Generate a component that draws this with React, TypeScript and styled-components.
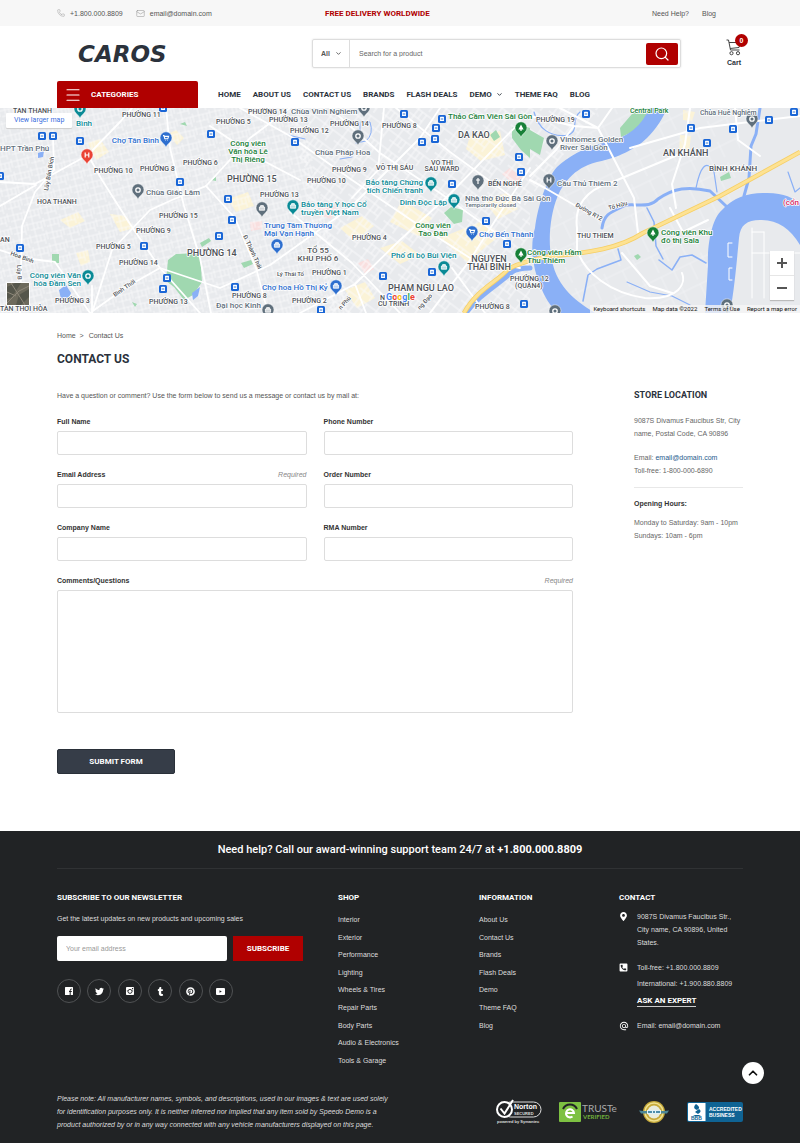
import React from "react";
import styled, { createGlobalStyle } from "styled-components";
import { ChevronDown, ChevronUp, Mail, Menu, Phone, Search } from "lucide-react";
import {
  FaMapMarkerAlt,
  FaPhoneSquareAlt,
  FaPinterest,
  FaTumblr,
  FaTwitter,
} from "react-icons/fa";
import { MdAlternateEmail } from "react-icons/md";

const sans = `"Liberation Sans", Arial, sans-serif`;
const display = `Roboto, "Liberation Sans", sans-serif`;
const red = "#b00000";
const ink = "#2b323c";

const GlobalStyle = createGlobalStyle`
  *, *::before, *::after { box-sizing: border-box; }
  body { margin: 0; background: #fff; color: #555; font: 7px/13px ${sans}; }
  a { color: inherit; text-decoration: none; }
  button, input, textarea, select { font: inherit; color: inherit; margin: 0; border: 0; padding: 0; background: none; }
  h1, h2, h3, p, ul { margin: 0; padding: 0; }
  ul { list-style: none; }
  svg { display: block; flex: none; }
`;

const Container = styled.div`
  padding: 0 57px;
`;

/* ---------- header ---------- */

const TopBar = styled(Container)`
  display: flex;
  align-items: center;
  height: 26px;
  background: #f7f7f7;
`;
const TopContacts = styled.div`
  display: flex;
  gap: 13px;
  flex: 0 0 268px;
`;
const TopLink = styled.a`
  display: flex;
  align-items: center;
  gap: 5px;
  svg { color: #999; }
`;
const Promo = styled.strong`
  font: 700 8px/13px ${display};
  color: ${red};
`;
const TopLinks = styled.nav`
  display: flex;
  gap: 13px;
  margin-left: auto;
  padding-right: 27px;
`;

const Brand = styled(Container)`
  display: flex;
  align-items: center;
  height: 55px;
`;
const Logo = styled.a`
  flex: 0 0 255px;
  padding-left: 21px;
  font: italic 700 23px/26px "DejaVu Sans", sans-serif;
  color: ${ink};
`;
const SearchForm = styled.form`
  display: flex;
  align-items: center;
  flex: 1;
  height: 29px;
  padding-right: 2px;
  border: 1px solid #ddd;
  border-radius: 2px;
  box-shadow: 0 0 2px #ddd;
`;
const ScopeBox = styled.div`
  position: relative;
  display: flex;
  align-items: center;
  height: 100%;
  border-right: 1px solid #ddd;
  svg { position: absolute; right: 7px; pointer-events: none; }
`;
const Scope = styled.select`
  appearance: none;
  width: 36px;
  height: 100%;
  padding-left: 8px;
  font-weight: 700;
`;
const SearchInput = styled.input`
  flex: 1;
  min-width: 0;
  height: 100%;
  padding: 0 9px;
  outline: 0;
  &::placeholder { color: #666; opacity: 1; }
`;
const SearchButton = styled.button`
  display: grid;
  place-items: center;
  width: 32px;
  height: 22px;
  border-radius: 2px;
  background: ${red};
  color: #fff;
`;
const Cart = styled.a`
  position: relative;
  display: flex;
  flex-direction: column;
  align-items: center;
  gap: 1px;
  width: 18px;
  margin-left: 44px;
  font-weight: 700;
  line-height: 11px;
  color: ${ink};
`;
const CartCount = styled.span`
  position: absolute;
  top: -5px;
  left: 10px;
  width: 13px;
  height: 13px;
  border-radius: 50%;
  background: ${red};
  color: #fff;
  line-height: 13px;
  text-align: center;
`;

const NavRow = styled(Container)`
  display: flex;
  align-items: center;
  height: 27px;
  font: 700 8px/13px ${display};
  color: ${ink};
`;
const Categories = styled.button`
  display: flex;
  align-items: center;
  gap: 9px;
  flex: 0 0 141px;
  height: 27px;
  padding-left: 7px;
  border-radius: 2px 2px 0 0;
  background: ${red};
  color: #fff;
`;
const MainNav = styled.nav`
  display: flex;
  gap: 12px;
  margin-left: 20px;
  white-space: nowrap;
  a { display: flex; align-items: center; gap: 4px; }
`;

/* ---------- map ---------- */

const MapFrame = styled.section`
  position: relative;
  height: 205px;
  overflow: hidden;
  background: #e8eaed;
  font-family: Roboto, sans-serif;
`;
const MapCanvas = styled.svg`
  width: 100%;
  height: 100%;
`;
const LargerMap = styled.a`
  position: absolute;
  top: 5px;
  left: 6px;
  padding: 1px 8px;
  border-radius: 1px;
  background: #fff;
  color: #3b6fe0;
  box-shadow: 0 1px 1px #ccc;
`;
const Satellite = styled.button`
  position: absolute;
  bottom: 7px;
  left: 6px;
  width: 24px;
  height: 24px;
  border: 1px solid #fff;
  border-radius: 1px;
  overflow: hidden;
`;
const ZoomControls = styled.div`
  position: absolute;
  right: 6px;
  bottom: 13px;
  display: grid;
  gap: 1px;
  width: 24px;
  background: #e6e6e6;
  box-shadow: 0 1px 1px #bbb;
`;
const ZoomButton = styled.button`
  display: grid;
  place-items: center;
  height: 24px;
  background: #fff;
`;
const Attribution = styled.div`
  position: absolute;
  right: 0;
  bottom: 0;
  display: flex;
  gap: 7px;
  padding: 0 3px;
  background: rgba(245, 245, 245, 0.8);
  font-size: 6px;
  line-height: 8px;
  color: #111;
`;

/* ---------- contact page ---------- */

const Breadcrumb = styled.nav`
  display: flex;
  gap: 5px;
  padding-top: 16px;
`;
const PageTitle = styled.h1`
  padding-top: 9px;
  font: 700 12px/16px ${display};
  color: ${ink};
`;
const Columns = styled.main`
  display: grid;
  grid-template-columns: 1fr 109px;
  gap: 61px;
  padding-top: 22px;
`;
const Form = styled.form`
  display: grid;
  grid-template-columns: 1fr 1fr;
  gap: 14px 17px;
  padding-bottom: 57px;
`;
const Wide = styled.div`
  grid-column: 1 / -1;
`;
const FieldHead = styled.div`
  display: flex;
  justify-content: space-between;
  height: 15px;
  line-height: 12px;
  label { font-weight: 700; color: #333; }
  em { color: #888; }
`;
const Input = styled.input`
  display: block;
  width: 100%;
  height: 24px;
  padding: 0 8px;
  border: 1px solid #ddd;
  border-radius: 2px;
`;
const TextArea = styled.textarea`
  display: block;
  width: 100%;
  height: 123px;
  padding: 8px;
  border: 1px solid #ddd;
  border-radius: 2px;
  resize: none;
`;
const Submit = styled.button`
  width: 118px;
  height: 25px;
  margin-top: 22px;
  border: 1px solid #2a3039;
  border-radius: 2px;
  background: #363d48;
  color: #fff;
  font: 700 8px/13px ${display};
`;
const Aside = styled.aside`
  color: #666;
  h2 { margin-bottom: 12px; font: 700 9px/13px ${display}; color: ${ink}; }
  h3 { margin-bottom: 6px; padding-top: 9px; border-top: 1px solid #e8e8e8; font: 700 7px/13px ${sans}; color: #333; }
  p { margin-bottom: 11px; white-space: nowrap; }
  p + h3 { margin-top: -1px; }
  a { color: #1e5a8c; }
`;

/* ---------- footer ---------- */

const Footer = styled.footer`
  position: relative;
  padding: 0 57px 12px;
  background: #212325;
  color: #ddd;
`;
const HelpLine = styled.p`
  padding: 10px 0 9px;
  border-bottom: 1px solid #303234;
  font: 500 11px/18px ${display};
  color: #fff;
  text-align: center;
`;
const FooterGrid = styled.div`
  display: grid;
  grid-template-columns: 281fr 141fr 140fr 124fr;
  padding-top: 22px;
`;
const FooterTitle = styled.h2`
  font: 700 8px/13px ${display};
  color: #fff;
`;
const Newsletter = styled.form`
  display: grid;
  grid-template-columns: 170px 70px;
  gap: 11px 6px;
  padding-top: 8px;
  label { grid-column: 1 / -1; }
`;
const EmailInput = styled.input`
  height: 25px;
  padding: 0 9px;
  border-radius: 2px;
  background: #fff;
  color: #333;
  &::placeholder { color: #999; opacity: 1; }
`;
const Subscribe = styled.button`
  height: 25px;
  background: ${red};
  color: #fff;
  font: 700 8px/13px ${display};
`;
const Social = styled.div`
  display: flex;
  justify-content: space-between;
  width: 176px;
  padding-top: 18px;
`;
const SocialLink = styled.a`
  display: grid;
  place-items: center;
  width: 24px;
  height: 24px;
  border: 1px solid #505254;
  border-radius: 50%;
  color: #fff;
`;
const LinkList = styled.ul`
  display: grid;
  grid-template-rows: repeat(9, 1fr);
  align-items: center;
  height: 158px;
  margin-top: 7px;
`;
const ContactItem = styled.div<{ $top: number }>`
  display: grid;
  grid-template-columns: 18px 1fr;
  padding-top: ${(p) => p.$top}px;
  white-space: nowrap;
  svg { margin-top: 2px; color: #fff; }
`;
const ContactLines = styled.div`
  display: grid;
  justify-items: start;
  gap: 3px;
`;
const Expert = styled.a`
  margin-top: 2px;
  border-bottom: 1px solid #ccc;
  font: 700 8px/11px ${display};
  color: #fff;
`;
const FooterBottom = styled.div`
  display: flex;
  justify-content: space-between;
  padding-top: 23px;
`;
const Disclaimer = styled.p`
  width: 345px;
  font-style: italic;
`;
const Badges = styled.div`
  display: flex;
  align-items: center;
  gap: 17px;
`;
const ToTop = styled.a`
  position: absolute;
  right: 36px;
  bottom: 59px;
  display: grid;
  place-items: center;
  width: 22px;
  height: 22px;
  border-radius: 50%;
  background: #fff;
  color: #111;
`;

/* ---------- map data ---------- */

const TONES = {
  area: "#4d5156",
  grey: "#5f6f7c",
  blue: "#2e6fcf",
  teal: "#0a8a96",
  green: "#188038",
  pink: "#d81b60",
  red: "#ea4335",
};
type Tone = keyof typeof TONES;
type Anchor = "start" | "middle" | "end";
type Label = [text: string, x: number, y: number, tone?: Tone, size?: number, anchor?: Anchor, turn?: number];

const LABELS: Label[] = [
  ["TAN THANH", 13, 5], ["Bình", 76, 18, "teal", 8], ["PHƯỜNG 11", 122, 9], ["PHƯỜNG 5", 216, 16],
  ["HPT Trần Phú", 0, 43, "grey", 8], ["Chợ Tân Bình", 159, 35, "blue", 8, "end"],
  ["Công viên", 248, 38, "green", 8, "middle"], ["Văn hóa Lê", 248, 46, "green", 8, "middle"], ["Thị Riêng", 248, 54, "green", 8, "middle"],
  ["PHƯỜNG 10", 94, 65], ["PHƯỜNG 8", 140, 63], ["PHƯỜNG 6", 183, 57], ["PHƯỜNG 15", 227, 74, "area", 9],
  ["Chùa Giác Lâm", 146, 87, "grey", 8], ["HOA THANH", 37, 96], ["PHƯỜNG 15", 159, 110], ["PHƯỜNG 9", 136, 125],
  ["PHƯỜNG 5", 96, 141], ["PHƯỜNG 14", 119, 157], ["PHƯỜNG 14", 187, 148, "area", 9],
  ["Công viên Văn", 81, 170, "teal", 8, "end"], ["hóa Đầm Sen", 81, 178, "teal", 8, "end"],
  ["PHƯỜNG 3", 55, 195], ["PHƯỜNG 13", 149, 196], ["PHƯỜNG 8", 232, 190], ["Đại học Kinh", 216, 200, "grey", 8],
  ["TÂN THỚI HÒA", 0, 203], ["AN", 0, 134], ["Hòa Bình", 10, 147, "area", 6, "start", 20], ["Lũy Bán Bích", 48, 83, "area", 6, "start", -80],
  ["Bình Thới", 115, 189, "area", 6, "start", -35], ["Đ. Thành Thái", 243, 128, "area", 6, "start", 65], ["Lũy B", 17, 157, "area", 6, "start", 88],
  ["PHƯỜNG 14", 248, 6], ["Chùa Vinh Nghiem", 291, 6, "grey", 8], ["PHƯỜNG 13", 269, 14], ["PHƯỜNG 12", 290, 25], ["PHƯỜNG 14", 330, 18],
  ["PHƯỜNG 8", 382, 20], ["Thảo Cầm Viên Sài Gòn", 448, 11, "green", 8], ["DA KAO", 458, 30, "area", 9], ["Chùa Pháp Hoa", 315, 47, "grey", 8],
  ["PHƯỜNG 9", 332, 64], ["VÕ THỊ SÁU", 376, 62], ["VO THI", 442, 57, "area", 7, "middle"], ["SAU WARD", 442, 63, "area", 7, "middle"], ["PHƯỜNG 10", 307, 75],
  ["PHƯỜNG 13", 260, 89], ["Bảo tàng Chứng", 423, 77, "teal", 8, "end"], ["tích Chiến tranh", 423, 85, "teal", 8, "end"], ["BẾN NGHÉ", 488, 78],
  ["Dinh Độc Lập", 447, 97, "teal", 8, "end"], ["Nhà thờ Đức Bà Sài Gòn", 465, 93, "grey", 8], ["Temporarily closed", 465, 99, "grey", 6],
  ["Bảo tàng Y học Cổ", 301, 99, "teal", 8], ["truyền Việt Nam", 301, 107, "teal", 8], ["Trung Tâm Thương", 264, 120, "blue", 8], ["Mại Vạn Hạnh", 264, 128, "blue", 8],
  ["PHƯỜNG 4", 352, 132], ["Công viên", 433, 120, "green", 8, "middle"], ["Tao Đàn", 433, 128, "green", 8, "middle"], ["Chợ Bến Thành", 479, 129, "blue", 8],
  ["TỔ 55", 318, 145, "area", 8, "middle"], ["KHU PHỐ 6", 318, 153, "area", 8, "middle"], ["Phố đi bộ Bùi Viện", 391, 150, "teal", 8],
  ["NGUYEN", 489, 154, "area", 9, "middle"], ["THAI BINH", 489, 162, "area", 9, "middle"], ["Lý Thái Tổ", 277, 168, "area", 6], ["PHƯỜNG 1", 312, 167],
  ["Chợ hoa Hồ Thị Kỷ", 262, 182, "blue", 8], ["PHAM NGU LAO", 388, 183, "area", 9], ["N", 380, 192], ["CU TRINH", 378, 198], ["PHƯỜNG 2", 292, 195],
  ["PHƯỜNG 8", 475, 201], ["PHƯỜNG 12", 510, 173], ["(QUẬN4)", 515, 180], ["n Phú", 341, 202, "area", 6, "start", -48], ["ng Đạo", 420, 202, "area", 6, "start", -48],
  ["PHƯỜNG 19", 536, 14], ["Central Park", 630, 5, "green", 7], ["Chùa Huê Nghiêm", 700, 7, "grey", 7],
  ["Vinhomes Golden", 560, 34, "grey", 8], ["River Sài Gòn", 560, 42, "grey", 8],
  ["AN KHÁNH", 663, 48, "area", 9], ["BÌNH KHÁNH", 709, 63, "area", 8], ["Cầu Thủ Thiêm 2", 557, 78, "grey", 8],
  ["Đường R12", 575, 98, "area", 6, "start", 30], ["Tố Hữu", 609, 102, "area", 6, "start", -15], ["THU THIEM", 577, 130],
  ["Công viên Hầm", 527, 147, "green", 8], ["Thu Thiêm", 527, 155, "green", 8], ["Công viên Khu", 661, 127, "green", 8], ["đô thị Sala", 661, 135, "green", 8],
  ["(cổn", 799, 97, "pink", 8, "end"],
];

const STOPS: [number, number][] = [
  [42, 28], [53, 28], [80, 33], [211, 26], [180, 74], [0, 68], [228, 91], [232, 112], [219, 128], [144, 138], [20, 140], [167, 170], [163, 181], [235, 179],
  [404, 6], [442, 11], [436, 20], [435, 31], [422, 34], [295, 34], [519, 49], [521, 64], [452, 76], [486, 113], [507, 136], [432, 164], [383, 168], [321, 202], [524, 196],
  [586, 6], [691, 20], [733, 21], [769, 12], [794, 4], [707, 35], [163, 0],
];

type Glyph = "dot" | "H" | "bag" | "tree" | "cross" | "cart";
const PINS: [number, number, Tone, Glyph][] = [
  [80, 1, "teal", "dot"], [87, 47, "red", "H"], [166, 30, "blue", "cart"], [138, 82, "grey", "dot"], [262, 100, "grey", "bag"], [88, 168, "teal", "dot"], [268, 202, "grey", "bag"],
  [364, 0, "grey", "dot"], [358, 28, "grey", "dot"], [521, 20, "green", "tree"], [431, 75, "teal", "bag"], [478, 73, "grey", "cross"], [454, 92, "teal", "bag"], [293, 98, "teal", "bag"],
  [472, 124, "blue", "cart"], [277, 137, "blue", "bag"], [521, 146, "green", "tree"], [444, 159, "teal", "bag"], [336, 178, "blue", "bag"],
  [552, 33, "grey", "dot"], [549, 72, "grey", "H"], [752, 11, "grey", "dot"], [653, 125, "green", "tree"], [555, 203, "grey", "dot"], [727, 197, "grey", "dot"],
];

const GLYPHS: Record<Glyph, React.ReactNode> = {
  dot: <circle r="2.2" fill="none" stroke="#fff" strokeWidth="1.3" />,
  H: <path d="M-1.8-2.5v5M1.8-2.5v5M-1.8 0h3.6" stroke="#fff" strokeWidth="1.2" fill="none" />,
  bag: <path d="M-2.6-1h5.2v3.2h-5.2zM-1.4-1v-1.4h2.8V-1" stroke="#fff" strokeWidth=".8" fill="#fff" fillOpacity=".7" />,
  tree: <path d="M0-3.4 2.6 1.4H.6v1.6H-.6V1.4h-2z" fill="#fff" />,
  cross: <path d="M0-3v6M-2-1h4" stroke="#fff" strokeWidth="1.2" />,
  cart: <path d="M-3-2.4h1l.8 3.2h3l.8-2.4h-4M-1 2.4h.4M1.6 2.4H2" stroke="#fff" strokeWidth="1.1" fill="none" />,
};

const Pin = ({ x, y, tone, glyph }: { x: number; y: number; tone: Tone; glyph: Glyph }) => (
  <g transform={`translate(${x} ${y})`}>
    <path d="M0 9.5C-.8 6-6 4.2-6-.2A6 6 0 0 1 6-.2C6 4.2.8 6 0 9.5Z" fill={TONES[tone]} stroke="#fff" strokeWidth=".5" />
    {GLYPHS[glyph]}
  </g>
);

const CityMap = () => (
  <MapCanvas viewBox="0 0 800 205" preserveAspectRatio="xMidYMid slice" role="img" aria-label="Map of Ho Chi Minh City">
    <defs>
      <pattern id="west" width="17" height="13" patternUnits="userSpaceOnUse" patternTransform="rotate(-14)">
        <path d="M0 3h17M0 9h12M4 0v13M12 3v10M8 3v6M15 0v9" stroke="#fafbfc" strokeWidth=".7" fill="none" />
      </pattern>
      <pattern id="mid" width="22" height="17" patternUnits="userSpaceOnUse" patternTransform="rotate(37)">
        <path d="M0 4h22M0 12h15M5 0v17M15 4v13M10 4v8" stroke="#fafbfc" strokeWidth=".9" fill="none" />
      </pattern>
      <pattern id="east" width="32" height="23" patternUnits="userSpaceOnUse" patternTransform="rotate(-26)">
        <path d="M0 5h32M8 5v18M22 0v17" stroke="#f2f4f6" strokeWidth=".7" fill="none" />
      </pattern>
    </defs>
    <rect width="800" height="205" fill="#e8eaed" />
    <g fill="#fbf3d7">
      <path d="M88 35l12-4 9 13-13 8zM60 112l18-8 7 9-15 7zM110 106l16 2 8 12-14 4zM168 26l8-4 8 8-7 7zM228 91l20-7 6 14-18 6zM18 10l20 3-6 8-14-2zM76 145l12-3 2 12-9 4z" />
      <path d="M470 28l30-5 5 24-24 6-15-12zM402 92l30 18-14 18-28-14zM440 130l40-16 22 12-35 28zM380 140l22-7 18 14-20 9zM340 120l22-12 12 10-20 15zM484 93l22-8 12 16-20 10zM345 182l20-8 10 16-18 10z" />
      <path d="M680 27l11 1-2 16-10 1zM683 2l12 2-3 9-9-1z" />
    </g>
    <g fill="#f9dfdf"><path d="M318 94l18 5-5 12-15-5zM502 66l8-6 13 10-6 9zM250 114l12-1v8l-11 2zM358 155l10-4 6 10-9 5z" /></g>
    <path d="M0 0H300L350 205H0Z" fill="url(#west)" />
    <path d="M290 0H600L530 90V205H330Z" fill="url(#mid)" />
    <path d="M600 0H740V90L705 205H540V90Z" fill="url(#east)" />
    <g fill="#a0d8b0">
      <path d="M168 152l8-6 24-1 2 29-9 13-9 5-10-13-8-6z" />
      <path d="M52 146h7v9h-7zM241 155l10-3 2 4-9 4zM211 72l5-3v4zM200 135l9-5 2 3-9 6zM180 16l5-2 2 4zM132 194l5 2-2 3z" />
      <path d="M444 105l7-6 12 3-1 12-8 2zM490 27l6-5 4 7-6 4zM512 20l7-4 11 4v30l-9-8-9-12z" />
      <path d="M530 22l14 8-4 17-10-6zM620 20l12-14 8-6h9l-8 20-20 9zM720 69l9-5 2 6-10 3zM634 148l4-2 3 3-4 3z" />
    </g>
    <g fill="#8ab0f6">
      <path d="M59 182l7-5 5 8-3 7-7-1zM38 45l6-2-1 6-5 1zM192 185l8-6-2 9-5 4z" />
      <path d="M649 0C643 17 627 30 607 34C583 39 567 50 557 59C547 70 538 97 535 120C530 136 532 158 540 177C545 190 550 197 557 205H595C583 197 560 184 553 157C547 137 550 107 557 90C562 77 573 60 597 54C623 49 640 37 647 30C657 20 663 10 667 0Z" />
      <path d="M705 205L708 157C707 137 712 110 722 102C733 90 747 85 763 85C783 84 793 90 800 95V137C790 120 777 112 760 112C747 112 740 117 739 130C737 150 735 177 730 205Z" />
    </g>
    <g fill="none" stroke="#8ab0f6" strokeLinecap="round" strokeLinejoin="round">
      <path d="M602 120C604 105 612 104 626 97C640 96 650 100 658 91C674 80 688 78 710 83L726 98" strokeWidth="3" />
      <path d="M760 0L756 26L751 38L749 70L744 88" strokeWidth="3" />
      <path d="M659 152L672 162L680 149L692 147L706 155M618 141L621 152L597 161L588 167L583 193M647 100L654 114L656 138L663 151" strokeWidth="1.5" />
      <path d="M534 4C538 20 550 30 568 27C580 23 570 12 580 4M696 80C700 60 706 50 714 64L717 84M627 174L650 184L672 188L690 197M788 64L795 84L800 80" strokeWidth="1.2" />
      <path d="M466 205C478 188 496 178 512 164C516 161 522 160 530 160" strokeWidth="5" />
      <path d="M360 25V14H370Q374 26 366 33L356 35M340 51L352 49M288 27L305 31" strokeWidth="1" />
    </g>
    <g fill="none" stroke="#fff" strokeLinecap="round" strokeLinejoin="round" strokeWidth="1.8">
      <path d="M0 74L35 76L88 47L120 14L132 0M53 28L54 62L35 84L22 118L20 205M0 98L36 77M88 47L102 72L130 116L160 160L200 205M166 0L170 40L184 98L200 150L211 205" />
      <path d="M92 205L112 142L150 102L172 92L206 78L250 30L290 0M0 142L24 150L55 154L90 205M90 205L128 178L160 160L220 180L270 157L350 100L420 30L440 0M92 205V178" />
      <path d="M206 78L235 110L256 160L268 205M240 0L290 28L352 72L420 118L470 150L520 160M330 0L380 45L440 85L510 135M300 205L355 176L400 132L450 86L520 14M355 176L366 205M290 104L352 155L400 205M384 0L378 62L352 90" />
      <path d="M430 205L470 152L500 105L530 60M396 0L450 44L520 95M452 160L485 205M210 18L258 50L300 72" />
      <path d="M530 72L545 80L600 112M530 68L556 42L574 18L598 20L634 90L638 125M598 20L612 0M574 18L530 8M598 20L560 0M676 100L672 76L685 36L690 0M630 40L700 20L800 8M577 120C574 98 586 82 610 75L680 46M577 120V142C585 165 610 185 645 190C680 192 686 175 682 165M622 145L650 178L672 185M735 0L738 32L760 48M670 100L683 124L708 112" strokeWidth="2" />
      <path d="M752 120V190M764 124V190M752 124H764M752 145H800M732 135h-4v14h4M732 160h-3v12h3" strokeWidth="1" />
    </g>
    <path d="M464 205C478 180 500 172 507 162C516 156 530 152 550 148C590 145 620 140 643 125L720 88L800 44" fill="none" stroke="#f6cf65" strokeWidth="4.600" />
    <path d="M464 205C478 180 500 172 507 162C516 156 530 152 550 148C590 145 620 140 643 125L720 88L800 44" fill="none" stroke="#fde293" strokeWidth="3" />
    {STOPS.map(([x, y]) => (
      <g key={`${x}-${y}`} transform={`translate(${x} ${y})`}>
        <rect x="-4" y="-4" width="8" height="8" rx="1.5" fill="#1a66d6" />
        <rect x="-2" y="-2.3" width="4" height="4.3" rx=".6" fill="#fff" />
        <path d="M-1.3 0h2.6" stroke="#1a66d6" strokeWidth=".9" />
      </g>
    ))}
    {PINS.map(([x, y, tone, glyph]) => (
      <Pin key={`${x}-${y}`} x={x} y={y} tone={tone} glyph={glyph} />
    ))}
    <g fontWeight="500" stroke="#fff" strokeWidth="1.5" strokeLinejoin="round" paintOrder="stroke">
      {LABELS.map(([text, x, y, tone = "area", size = 7, anchor = "start", turn = 0]) => (
        <text key={`${text}-${x}-${y}`} x={x} y={y} fill={TONES[tone]} fontSize={size} textAnchor={anchor} transform={turn ? `rotate(${turn} ${x} ${y})` : undefined}>
          {text}
        </text>
      ))}
      <text x="386" y="192" fontSize="9" fontWeight="700">
        <tspan fill="#4285f4">G</tspan><tspan fill="#ea4335">o</tspan><tspan fill="#fbbc04">o</tspan><tspan fill="#4285f4">g</tspan><tspan fill="#34a853">l</tspan><tspan fill="#ea4335">e</tspan>
      </text>
    </g>
  </MapCanvas>
);

const SatelliteThumb = () => (
  <svg width="22" height="22" viewBox="0 0 22 22" aria-hidden="true">
    <rect width="22" height="22" fill="#6d6a5c" />
    <path d="M0 4l8-4h6L5 14l-5 2zM12 12l10-6v8l-8 8H9z" fill="#55564b" />
    <path d="M0 20L12 8l10-5M4 0l14 22M0 9l9 4" stroke="#8e887a" fill="none" />
  </svg>
);

/* ---------- drawings ---------- */

const CartIcon = () => (
  <svg width="16" height="17" viewBox="0 0 16 17" fill="none" stroke="#444" strokeWidth="1" aria-hidden="true">
    <path d="M.5 1h2l2 10h9M3 3.5h11.5L13 8.500l-9 1" />
    <circle cx="5.5" cy="14.2" r="1.6" />
    <circle cx="12" cy="14.2" r="1.6" />
  </svg>
);

const FacebookIcon = () => (
  <svg width="8" height="8" viewBox="0 0 8 8" aria-hidden="true">
    <rect width="8" height="8" rx=".5" fill="#fff" />
    <path d="M5.200 8V3.200Q5.200 2 6.800 2M4 4.500h2.800" fill="none" stroke="#212325" strokeWidth="1" />
  </svg>
);

const InstagramIcon = () => (
  <svg width="8" height="8" viewBox="0 0 8 8" aria-hidden="true">
    <rect width="8" height="8" rx=".8" fill="#fff" />
    <circle cx="4" cy="4.400" r="2" fill="none" stroke="#212325" strokeWidth=".9" />
    <path d="M6 1h1.200v1.200H6zM.8 3.400h1v.8h-1zM6.200 3.400h1v.8h-1z" fill="#212325" />
  </svg>
);

const VideoIcon = () => (
  <svg width="9" height="7" viewBox="0 0 9 7" aria-hidden="true">
    <rect width="9" height="7" rx="1" fill="#fff" />
    <path d="M3.500 2.200v2.600l2.300-1.300z" fill="#212325" />
  </svg>
);

const NortonBadge = () => (
  <svg width="46" height="26" viewBox="0 0 46 26" role="img" aria-label="Norton Secured" fontFamily="Liberation Sans">
    <rect x="7" y="3" width="38" height="15" rx="7.500" fill="#212325" stroke="#ddd" />
    <circle cx="8.500" cy="10.500" r="7.500" fill="#212325" stroke="#fff" strokeWidth="2" />
    <path d="M4.500 9.500l4 5L17 1" fill="none" stroke="#fff" strokeWidth="2" />
    <text x="18" y="10" fontSize="7" fontWeight="700" fill="#fff">Norton</text>
    <text x="18" y="16" fontSize="4" fontWeight="700" fill="#ddd">SECURED</text>
    <text x="1" y="24" fontSize="4" fontWeight="700" fill="#ddd">powered by Symantec</text>
  </svg>
);

const TrusteBadge = () => (
  <svg width="62" height="22" viewBox="0 0 62 22" role="img" aria-label="TRUSTe Verified" fontFamily="Lato">
    <rect y="1" width="22" height="20" rx="1" fill="#7dc142" />
    <path d="M4 8C7 2 15 2 18 8" fill="none" stroke="#212325" strokeWidth="2" />
    <path d="M7 12h8a4 4 0 1 0-1.5 3.5" fill="none" stroke="#fff" strokeWidth="2" />
    <text x="23" y="11" fontSize="10" fill="#aaa">TRUSTe</text>
    <text x="24" y="18" fontSize="6" fontWeight="700" fill="#6fae3c">VERIFIED</text>
  </svg>
);

const SealBadge = () => (
  <svg width="32" height="24" viewBox="0 0 32 24" role="img" aria-label="Seal">
    <circle cx="16" cy="12" r="11" fill="#c6a93a" />
    <circle cx="16" cy="12" r="9" fill="none" stroke="#efe08f" strokeWidth="1.5" />
    <circle cx="16" cy="12" r="6.5" fill="#e8ecdf" />
    <path d="M1 10.500l5 .5h20l5-.5-2 3H3z" fill="#4d8796" />
    <path d="M9 10h14v4H9z" fill="#dff0f5" />
    <path d="M10 12h4m1 0h2m1 0h4" stroke="#1d6c93" strokeWidth="1.5" />
  </svg>
);

const BbbBadge = () => (
  <svg width="56" height="22" viewBox="0 0 56 22" role="img" aria-label="BBB Accredited Business" fontFamily="Liberation Sans">
    <rect y="1" width="56" height="20" rx="2" fill="#0f6394" />
    <path d="M1 3a1 1 0 0 1 1-1h16.5v18H2a1 1 0 0 1-1-1z" fill="#fff" />
    <path d="M9 3c4 3 4 4 1 6-3-1-4-3-1-6zm3 5c3 2 1 4-1 5l-3-2zM6 14h8l-2 1H8z" fill="#0f6394" />
    <text x="4" y="19" fontSize="5" fontWeight="700" fill="#0f6394">BBB</text>
    <text x="22" y="10" fontSize="5" fontWeight="700" fill="#fff">ACCREDITED</text>
    <text x="22" y="16" fontSize="5" fontWeight="700" fill="#fff">BUSINESS</text>
  </svg>
);

/* ---------- page ---------- */

const NAV = ["HOME", "ABOUT US", "CONTACT US", "BRANDS", "FLASH DEALS", "DEMO", "THEME FAQ", "BLOG"];
const FIELDS = [
  { id: "name", label: "Full Name" },
  { id: "phone", label: "Phone Number" },
  { id: "email", label: "Email Address", required: true },
  { id: "order", label: "Order Number" },
  { id: "company", label: "Company Name" },
  { id: "rma", label: "RMA Number" },
];
const SHOP = ["Interior", "Exterior", "Performance", "Lighting", "Wheels & Tires", "Repair Parts", "Body Parts", "Audio & Electronics", "Tools & Garage"];
const INFO = ["About Us", "Contact Us", "Brands", "Flash Deals", "Demo", "Theme FAQ", "Blog"];
const SOCIAL = [
  { name: "Facebook", icon: <FacebookIcon /> },
  { name: "Twitter", icon: <FaTwitter size={9} /> },
  { name: "Instagram", icon: <InstagramIcon /> },
  { name: "Tumblr", icon: <FaTumblr size={9} /> },
  { name: "Pinterest", icon: <FaPinterest size={9} /> },
  { name: "YouTube", icon: <VideoIcon /> },
];

const FooterLinks = ({ title, items }: { title: string; items: string[] }) => (
  <div>
    <FooterTitle>{title}</FooterTitle>
    <LinkList>
      {items.map((item) => (
        <li key={item}><a href="#">{item}</a></li>
      ))}
    </LinkList>
  </div>
);

export default function App() {
  return (
    <>
      <GlobalStyle />
      <header>
        <TopBar>
          <TopContacts>
            <TopLink href="tel:+18000008809"><Phone size={8} strokeWidth={1.5} />+1.800.000.8809</TopLink>
            <TopLink href="mailto:email@domain.com"><Mail size={9} strokeWidth={1.5} />email@domain.com</TopLink>
          </TopContacts>
          <Promo>FREE DELIVERY WORLDWIDE</Promo>
          <TopLinks>
            <a href="#">Need Help?</a>
            <a href="#">Blog</a>
          </TopLinks>
        </TopBar>
        <Brand>
          <Logo href="#">CAROS</Logo>
          <SearchForm>
            <ScopeBox>
              <Scope aria-label="Category"><option>All</option></Scope>
              <ChevronDown size={7} strokeWidth={3} />
            </ScopeBox>
            <SearchInput type="search" aria-label="Search" placeholder="Search for a product" />
            <SearchButton type="button" aria-label="Search"><Search size={16} strokeWidth={1.8} /></SearchButton>
          </SearchForm>
          <Cart href="#">
            <CartIcon />
            <CartCount>0</CartCount>
            Cart
          </Cart>
        </Brand>
        <NavRow>
          <Categories type="button"><Menu size={18} strokeWidth={1.5} />CATEGORIES</Categories>
          <MainNav>
            {NAV.map((item) => (
              <a href="#" key={item}>{item}{item === "DEMO" && <ChevronDown size={7} strokeWidth={3} />}</a>
            ))}
          </MainNav>
        </NavRow>
      </header>

      <MapFrame>
        <CityMap />
        <LargerMap href="#">View larger map</LargerMap>
        <Satellite type="button" aria-label="Satellite view"><SatelliteThumb /></Satellite>
        <ZoomControls>
          <ZoomButton type="button" aria-label="Zoom in">
            <svg width="12" height="12"><path d="M6 1v10M1 6h10" stroke="#555" strokeWidth="2" /></svg>
          </ZoomButton>
          <ZoomButton type="button" aria-label="Zoom out">
            <svg width="12" height="12"><path d="M1 6h10" stroke="#555" strokeWidth="2" /></svg>
          </ZoomButton>
        </ZoomControls>
        <Attribution>
          <a href="#">Keyboard shortcuts</a>
          <span>Map data ©2022</span>
          <a href="#">Terms of Use</a>
          <a href="#">Report a map error</a>
        </Attribution>
      </MapFrame>

      <Container>
        <Breadcrumb aria-label="Breadcrumb"><a href="#">Home &nbsp;&gt;</a><span>Contact Us</span></Breadcrumb>
        <PageTitle>CONTACT US</PageTitle>
        <Columns>
          <Form>
            <Wide as="p">Have a question or comment? Use the form below to send us a message or contact us by mail at:</Wide>
            {FIELDS.map((f) => (
              <div key={f.id}>
                <FieldHead><label htmlFor={f.id}>{f.label}</label>{f.required && <em>Required</em>}</FieldHead>
                <Input id={f.id} />
              </div>
            ))}
            <Wide>
              <FieldHead><label htmlFor="comments">Comments/Questions</label><em>Required</em></FieldHead>
              <TextArea id="comments" />
            </Wide>
            <Wide><Submit type="button">SUBMIT FORM</Submit></Wide>
          </Form>
          <Aside>
            <h2>STORE LOCATION</h2>
            <p>9087S Divamus Faucibus Str, City<br />name, Postal Code, CA 90896</p>
            <p>Email: <a href="mailto:email@domain.com">email@domain.com</a><br />Toll-free: 1-800-000-6890</p>
            <h3>Opening Hours:</h3>
            <p>Monday to Saturday: 9am - 10pm<br />Sundays: 10am - 6pm</p>
          </Aside>
        </Columns>
      </Container>

      <Footer>
        <HelpLine>Need help? Call our award-winning support team 24/7 at <strong>+1.800.000.8809</strong></HelpLine>
        <FooterGrid>
          <div>
            <FooterTitle>SUBSCRIBE TO OUR NEWSLETTER</FooterTitle>
            <Newsletter>
              <label htmlFor="newsletter">Get the latest updates on new products and upcoming sales</label>
              <EmailInput id="newsletter" type="email" placeholder="Your email address" />
              <Subscribe type="button">SUBSCRIBE</Subscribe>
            </Newsletter>
            <Social>
              {SOCIAL.map((s) => (
                <SocialLink href="#" key={s.name} aria-label={s.name}>{s.icon}</SocialLink>
              ))}
            </Social>
          </div>
          <FooterLinks title="SHOP" items={SHOP} />
          <FooterLinks title="INFORMATION" items={INFO} />
          <div>
            <FooterTitle>CONTACT</FooterTitle>
            <ContactItem $top={6}>
              <FaMapMarkerAlt size={9} />
              <p>9087S Divamus Faucibus Str.,<br />City name, CA 90896, United<br />States.</p>
            </ContactItem>
            <ContactItem $top={12}>
              <FaPhoneSquareAlt size={9} />
              <ContactLines>
                <span>Toll-free: +1.800.000.8809</span>
                <span>International: +1.900.880.8809</span>
                <Expert href="#">ASK AN EXPERT</Expert>
              </ContactLines>
            </ContactItem>
            <ContactItem $top={12}>
              <MdAlternateEmail size={10} />
              <a href="mailto:email@domain.com">Email: email@domain.com</a>
            </ContactItem>
          </div>
        </FooterGrid>
        <FooterBottom>
          <Disclaimer>
            Please note: All manufacturer names, symbols, and descriptions, used in our images &amp; text are used solely<br />
            for identification purposes only. It is neither inferred nor implied that any item sold by Speedo Demo is a<br />
            product authorized by or in any way connected with any vehicle manufacturers displayed on this page.
          </Disclaimer>
          <Badges>
            <NortonBadge />
            <TrusteBadge />
            <SealBadge />
            <BbbBadge />
          </Badges>
        </FooterBottom>
        <ToTop href="#" aria-label="Back to top"><ChevronUp size={14} strokeWidth={3} /></ToTop>
      </Footer>
    </>
  );
}
